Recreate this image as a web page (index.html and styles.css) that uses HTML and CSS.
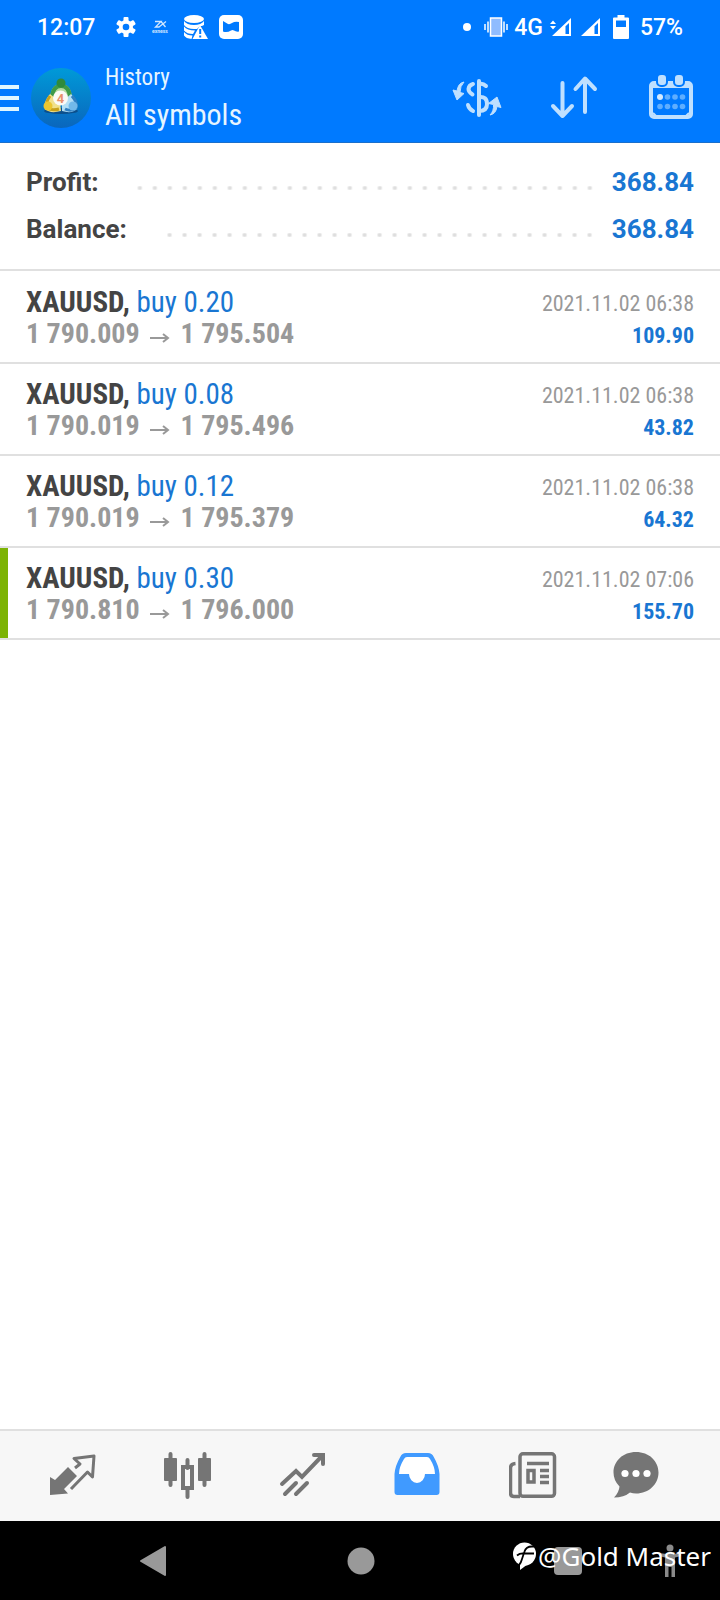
FILE: index.html
```html
<!DOCTYPE html>
<html lang="en">
<head>
<meta charset="utf-8">
<meta name="viewport" content="width=device-width, initial-scale=1">
<title>History</title>
<link rel="stylesheet" href="styles.css">
</head>
<body>
<div class="app">
  <div class="status">
    <span class="status-time">12:07</span>
    <svg class="st-gear" width="20" height="20" viewBox="0 0 20 20"><g fill="#fff"><circle cx="10" cy="10" r="7"/><rect x="7.5" y="0" width="5" height="20" rx="1"/><rect x="7.5" y="0" width="5" height="20" rx="1" transform="rotate(60 10 10)"/><rect x="7.5" y="0" width="5" height="20" rx="1" transform="rotate(120 10 10)"/></g><circle cx="10" cy="10" r="3.3" fill="#007aff"/></svg>
    <svg class="st-fx" width="18" height="14" viewBox="0 0 18 14"><path d="M3 1.500h6L3.500 7h4M14 1.500L7 7M9 1.500L13.500 7" fill="none" stroke="#cfe6ff" stroke-width="1.300"/><text x="0" y="12.500" font-size="5" font-weight="700" fill="#cfe6ff">exness</text></svg>
    <svg class="st-db" width="24" height="24" viewBox="0 0 24 24"><g fill="#fff"><ellipse cx="10" cy="4" rx="10" ry="4"/><path d="M0 6q3 4 10 4t10-4v4l-2 1-2 0-3 3H10Q3 14 0 10z"/><path d="M0 11.500q3 4 11 4l-2 3.500Q3 19 0 15.500z"/><path d="M0 17q3 3.500 8.500 3.500L7.500 24Q2 23.500 0 20.500z"/><path d="M16 10l8 14H8.500z"/></g><path d="M16.200 14v5M16.200 20.500v2" stroke="#007aff" stroke-width="2"/></svg>
    <svg class="st-app" width="24" height="24" viewBox="0 0 24 24"><rect width="24" height="24" rx="5" fill="#fff"/><path d="M4 6l5 3q2 .5 4-1 3-2 7-1v9.500q-3 .5-5-1-1.500-1-3 0-4 2.500-8 1z" fill="#007aff"/></svg>
    <div class="status-right">
      <svg class="st-dot" width="8" height="8" viewBox="0 0 8 8"><circle cx="4" cy="4" r="4" fill="#fff"/></svg>
      <svg class="st-vib" width="24" height="20" viewBox="0 0 24 20"><path d="M1 7v6M4 4.500v11M20 4.500v11M23 7v6" stroke="#fff" stroke-width="1.500"/><rect x="6.500" y="1" width="11" height="18" fill="#8fbcff" stroke="#fff" stroke-width="1.500"/></svg>
      <span class="st-net">4G</span>
      <svg class="st-sig" width="21" height="18" viewBox="0 0 21 18"><path d="M0 6l3-3.500L6 6zM0 8l3 3.500L6 8zM2 18L21 0v18z" fill="#fff"/><path d="M19 5v11h-3.500V8.300z" fill="#007aff"/></svg>
      <svg class="st-sig2" width="19" height="18" viewBox="0 0 19 18"><path d="M0 18L19 0v18z" fill="#fff"/><path d="M17 5v11h-3.500V8.300z" fill="#007aff"/></svg>
      <svg class="st-bat" width="16" height="24" viewBox="0 0 16 24"><path d="M4.500 0h7v2.500H15q1 0 1 1V23q0 1-1 1H1q-1 0-1-1V3.500q0-1 1-1h3.500z" fill="#fff"/><path d="M3 5.500h10v6.500H3z" fill="#007aff"/></svg>
      <span>57%</span>
    </div>
  </div>

  <header class="bar">
    <button class="menu" aria-label="Menu"><span class="line"></span><span class="line"></span><span class="line"></span></button>
    <svg class="logo" width="60" height="60" viewBox="0 0 60 60">
      <defs>
        <linearGradient id="sea" x1="0" y1="0" x2="0" y2="1"><stop offset="0" stop-color="#009ad8"/><stop offset="1" stop-color="#0a66bd"/></linearGradient>
      </defs>
      <circle cx="30" cy="30" r="30" fill="url(#sea)"/>
      <ellipse cx="30" cy="43" rx="17" ry="3" fill="#0b4f8c"/>
      <path d="M19 30q1-14 11-14t11 14z" fill="#b5dba0"/>
      <path d="M21 29q1-11 9-11t9 11" fill="none" stroke="#3f9a48" stroke-width="4"/>
      <circle cx="30" cy="15" r="4.500" fill="#2f8a3c"/>
      <path d="M19 26q-7 8-5 15 5 5 16 2l-1-9z" fill="#f0e08a"/>
      <path d="M19 28q-5 7-3 12 5 3 12 1" fill="none" stroke="#c9a21c" stroke-width="3"/>
      <circle cx="17" cy="38" r="4.500" fill="#ecc62f"/>
      <path d="M40 26q8 8 6 15-5 5-15 2l0-9z" fill="#b4dff5"/>
      <path d="M41 28q6 7 4 12-5 4-11 1" fill="none" stroke="#2e7fc2" stroke-width="3"/>
      <circle cx="42" cy="38" r="4.500" fill="#72b9ea"/>
      <circle cx="29.500" cy="30" r="7.500" fill="#fbfaf5"/><text x="29.500" y="34.500" font-size="13" font-weight="700" fill="#e9916c" text-anchor="middle">4</text>
    </svg>
    <div class="titles"><h1 class="title">History</h1><div class="subtitle">All symbols</div></div>
    <div class="actions">
      <button class="act" aria-label="Symbols"><svg width="50" height="48" viewBox="0 2 50 48"><g fill="none" stroke="#bfe0ff" stroke-width="4" stroke-linecap="round" stroke-linejoin="round"><path d="M27 9v34"/><path d="M34 14q-3-3-7-2M27 25q8-1 8 7 0 7-8 7"/><path d="M21 12q-4 1-4.500 5 0 3 4 5.500"/><path d="M21 39q-4-2-5-6"/></g><g fill="#bfe0ff" stroke="#bfe0ff" stroke-linejoin="round"><path d="M12 10Q6 11 5 19l-4-1 4 10 7-6.500-4-1Q8 14 12 10z"/><path d="M38 43q6-1 7-8.500l4 1L45 25l-8.500 6.500 5 1Q42 39 38 43z"/></g></svg></button>
      <button class="act" aria-label="Sort"><svg width="48" height="48" viewBox="0 3 48 48"><path d="M12.500 12v33M3 35l9.500 10L22 35M35 41V8M25.500 18L35 7.500 45 18" fill="none" stroke="#bfe0ff" stroke-width="4" stroke-linecap="round" stroke-linejoin="round"/></svg></button>
      <button class="act" aria-label="Period"><svg width="48" height="48" viewBox="0 2 48 48"><rect x="4" y="11" width="40" height="34" rx="3" fill="none" stroke="#bfe0ff" stroke-width="4"/><path d="M4 10h40v6H4z" fill="#bfe0ff"/><rect x="10" y="2" width="10" height="12" rx="4" fill="#bfe0ff" stroke="#007aff" stroke-width="2"/><rect x="27" y="2" width="10" height="12" rx="4" fill="#bfe0ff" stroke="#007aff" stroke-width="2"/><path d="M6 41l4 4h28l4-4" fill="none" stroke="#bfe0ff" stroke-width="2"/><g fill="#5faeff"><circle cx="20.500" cy="25" r="2.800"/><circle cx="28" cy="25" r="2.800"/><circle cx="35.500" cy="25" r="2.800"/><circle cx="13" cy="34.500" r="2.800"/><circle cx="20.500" cy="34.500" r="2.800"/><circle cx="28" cy="34.500" r="2.800"/><circle cx="35.500" cy="34.500" r="2.800"/></g><circle cx="13" cy="25" r="3" fill="#d4eaff"/></svg></button>
    </div>
  </header>

  <main class="content">
    <dl class="summary">
      <div class="sum-row"><dt>Profit:</dt><dd><span class="dots"></span>368.84</dd></div>
      <div class="sum-row"><dt>Balance:</dt><dd><span class="dots"></span>368.84</dd></div>
    </dl>
    <ul class="deals">
      <li class="deal"><div><div class="name"><b>XAUUSD,</b> buy 0.20</div><div class="price">1 790.009 <svg class="arrow" width="20" height="10" viewBox="0 0 20 10"><path d="M0 5h18M13 1l5 4-5 4" /></svg> 1 795.504</div></div><div class="right"><div class="date">2021.11.02 06:38</div><div class="gain">109.90</div></div></li>
      <li class="deal"><div><div class="name"><b>XAUUSD,</b> buy 0.08</div><div class="price">1 790.019 <svg class="arrow" width="20" height="10" viewBox="0 0 20 10"><path d="M0 5h18M13 1l5 4-5 4" /></svg> 1 795.496</div></div><div class="right"><div class="date">2021.11.02 06:38</div><div class="gain">43.82</div></div></li>
      <li class="deal"><div><div class="name"><b>XAUUSD,</b> buy 0.12</div><div class="price">1 790.019 <svg class="arrow" width="20" height="10" viewBox="0 0 20 10"><path d="M0 5h18M13 1l5 4-5 4" /></svg> 1 795.379</div></div><div class="right"><div class="date">2021.11.02 06:38</div><div class="gain">64.32</div></div></li>
      <li class="deal deal-marked"><div><div class="name"><b>XAUUSD,</b> buy 0.30</div><div class="price">1 790.810 <svg class="arrow" width="20" height="10" viewBox="0 0 20 10"><path d="M0 5h18M13 1l5 4-5 4" /></svg> 1 796.000</div></div><div class="right"><div class="date">2021.11.02 07:06</div><div class="gain">155.70</div></div></li>
    </ul>
  </main>

  <nav class="tabs">
    <button class="tab" aria-label="Quotes"><svg width="48" height="48" viewBox="1 1 48 48"><path d="M2 26l5 3 13-13 9 9-13 13 4 4.500L2 44z" fill="#757575"/><path d="M27 17l5-4-6-5.500L46 5l-1.500 21-5-5L23 38" fill="none" stroke="#757575" stroke-width="3" stroke-linejoin="round"/></svg></button>
    <button class="tab" aria-label="Charts"><svg width="48" height="48" viewBox="1 1 48 48"><path d="M7.500 3v31M41.500 3v31M24.500 9v8M24.500 38v8" stroke="#757575" stroke-width="4" stroke-linecap="round"/><rect x="1" y="7" width="13" height="23" rx="1" fill="#757575"/><rect x="35" y="7" width="13" height="23" rx="1" fill="#757575"/><rect x="20" y="16" width="9" height="21" fill="none" stroke="#757575" stroke-width="4"/></svg></button>
    <button class="tab" aria-label="Trade"><svg width="48" height="48" viewBox="0 1 48 48"><path d="M3 33l14-13 6 6L43 5M35 4h9v9M6 43l11-11M17 43l11-11" fill="none" stroke="#757575" stroke-width="4" stroke-linecap="round"/></svg></button>
    <button class="tab" aria-label="History" aria-current="page"><svg width="48" height="48" viewBox="1 1 48 48"><path d="M13 2h22q4 0 5.500 3.500Q46 15 46.500 23v18q0 3-3 3H4.500q-3 0-3-3V23Q2 15 7.500 5.500 9 2 13 2z" fill="#409aff"/><path d="M14 6h20q2 0 3 2 5 8 5 15H32a8 9 0 0 1-16 0H6q0-7 5-15 1-2 3-2z" fill="#fff"/></svg></button>
    <button class="tab" aria-label="News"><svg width="48" height="48" viewBox="0 0 48 48"><g fill="none" stroke="#757575" stroke-width="3.500"><rect x="11" y="1.800" width="34.500" height="42.500" rx="3"/><path d="M11 44.500H5q-3.500 0-3.500-3.500V16q0-4 5-4.500"/><rect x="19" y="18.500" width="6" height="11.500"/><path d="M18 11.500h22M31 18.500h9M31 24.500h9M31 30.500h9"/></g></svg></button>
    <button class="tab" aria-label="Messages"><svg width="48" height="48" viewBox="0 0 48 48"><path d="M24 0c13 0 22.500 9 22.500 20.500S37 41.500 24 41.500q-3 0-6-1-6 5-16 5 5-5 5.500-11-6-6-6-14C1.500 9 11 0 24 0z" fill="#757575"/><circle cx="13" cy="21.500" r="3.600" fill="#fff"/><circle cx="24" cy="21.500" r="3.600" fill="#fff"/><circle cx="35" cy="21.500" r="3.600" fill="#fff"/></svg></button>
  </nav>

  <div class="system">
    <button class="sys" aria-label="Back"><svg width="32" height="32" viewBox="0 0 32 32"><path d="M27 2v28L3 16z" fill="#999" stroke="#999" stroke-width="2" stroke-linejoin="round"/></svg></button>
    <button class="sys" aria-label="Home"><svg width="32" height="32" viewBox="0 0 32 32"><circle cx="16" cy="16" r="13.500" fill="#999"/></svg></button>
    <button class="sys" aria-label="Recent"><svg width="32" height="32" viewBox="0 0 32 32"><rect x="2" y="2" width="28" height="28" rx="4" fill="#999"/></svg></button>
    <button class="sys sys-person" aria-label="Accessibility"><svg width="24" height="34" viewBox="0 0 24 34"><circle cx="12" cy="4" r="3.500" fill="#8a8a8a"/><path d="M1 9q11 2 22 0v3l-6 1.500V33h-3.500V23h-3v10H7V13.500L1 12z" fill="#8a8a8a"/></svg></button>
    <div class="mark"><svg width="26" height="30" viewBox="0 0 26 30"><circle cx="12.500" cy="13" r="11.500" fill="#fff"/><path d="M8 22l0 7 8-6z" fill="#fff"/><path d="M5 14.500Q8 12 12 12.500h10M24 5.500h-4q-6 0-7.500 5L10 18q-1 4-3 6" fill="none" stroke="#000" stroke-width="1.800"/></svg><span>@Gold Master</span></div>
  </div>
</div>
</body>
</html>
```
FILE: styles.css
```css
* { box-sizing: border-box; }

body {
  margin: 0;
  background: #fff;
  color: #444;
  font-family: Roboto, "Liberation Sans", sans-serif;
}

button {
  padding: 0;
  border: 0;
  background: none;
  color: inherit;
  font: inherit;
  cursor: pointer;
}

svg { display: block; flex: none; }

.app {
  display: flex;
  flex-direction: column;
  min-height: 100vh;
}

.status {
  display: flex;
  align-items: center;
  height: 54px;
  padding: 0 37px;
  background: #007aff;
  color: #fff;
  font-size: 23px;
  font-weight: 500;
}
.status-time { width: 79px; }
.st-fx { margin-left: 16px; }
.st-db { margin-left: 14px; }
.st-app { margin-left: 11px; }
.status-right { display: flex; align-items: center; margin-left: auto; }
.st-vib { margin-left: 13px; }
.st-net { margin: 0 7px 0 6px; }
.st-sig2 { margin: 0 13px 0 10px; }
.st-bat { margin-right: 11px; }

.bar {
  display: flex;
  align-items: center;
  height: 89px;
  padding-right: 25px;
  background: #007aff;
  border-bottom: 1px solid #1a6fcc;
  color: #e6f5ff;
}
.menu {
  display: flex;
  flex-direction: column;
  gap: 7px;
  width: 19px;
}
.line { height: 4px; background: #e0f6ff; }
.logo { margin-left: 12px; }
.titles {
  margin-left: 14px;
  font-family: "Roboto Condensed", "Liberation Sans Narrow", Roboto, sans-serif;
  white-space: nowrap;
}
.title { margin: 0; font-size: 23px; font-weight: 400; line-height: 34px; }
.subtitle { font-size: 30px; line-height: 40px; }
.actions { display: flex; gap: 49px; margin-left: auto; }
.act { display: flex; justify-content: center; width: 48px; }

.content { flex: 1; }

.summary {
  margin: 0;
  padding: 16px 26px;
  border-bottom: 2px solid #e0e0e0;
  font-size: 26px;
  font-weight: 700;
  line-height: 47px;
}
.sum-row { display: flex; }
.sum-row dd {
  display: flex;
  flex: 1;
  align-items: center;
  margin: 0;
  color: #1976d2;
}
.dots {
  flex: 1;
  height: 4px;
  margin: 10px 15px 0 36px;
  background: radial-gradient(circle, #dedede 1px, transparent 3px) right center / 15px 4px repeat-x;
}

.deals {
  margin: 0;
  padding: 1px 0 0;
  list-style: none;
  font-family: "Roboto Condensed", "Liberation Sans Narrow", Roboto, sans-serif;
}
.deal {
  display: flex;
  justify-content: space-between;
  height: 92px;
  padding: 14px 26px 0;
  border-bottom: 2px solid #e0e0e0;
  line-height: 32px;
  white-space: nowrap;
}
.deal-marked { box-shadow: inset 8px 0 #7cb305; }
.name { color: #1976d2; font-size: 29px; }
.name b { color: #444; }
.price { color: #999; font-size: 28px; font-weight: 700; }
.arrow {
  display: inline-block;
  margin: 0 4px;
  fill: none;
  stroke: #999;
  stroke-width: 2;
}
.right { padding-top: 2px; text-align: right; font-size: 22px; }
.date { color: #999; }
.gain { color: #1976d2; font-weight: 700; }

.tabs {
  display: grid;
  grid-template-columns: repeat(5, 5fr) 4fr;
  height: 92px;
  padding: 0 38px 0 15px;
  border-top: 2px solid #e0e0e0;
  background: #f7f7f7;
}
.tab { display: grid; place-items: center; }

.system {
  position: relative;
  display: grid;
  grid-template-columns: repeat(3, 1fr);
  height: 79px;
  padding: 0 48px 0 50px;
  background: #000;
}
.sys { display: grid; place-items: center; }
.sys-person { position: absolute; top: 23px; right: 38px; }
.mark {
  position: absolute;
  top: 16px;
  right: 9px;
  display: flex;
  align-items: center;
  color: #fff;
  font-family: "Noto Sans", sans-serif;
  font-size: 26px;
  line-height: 38px;
  white-space: nowrap;
}
```
